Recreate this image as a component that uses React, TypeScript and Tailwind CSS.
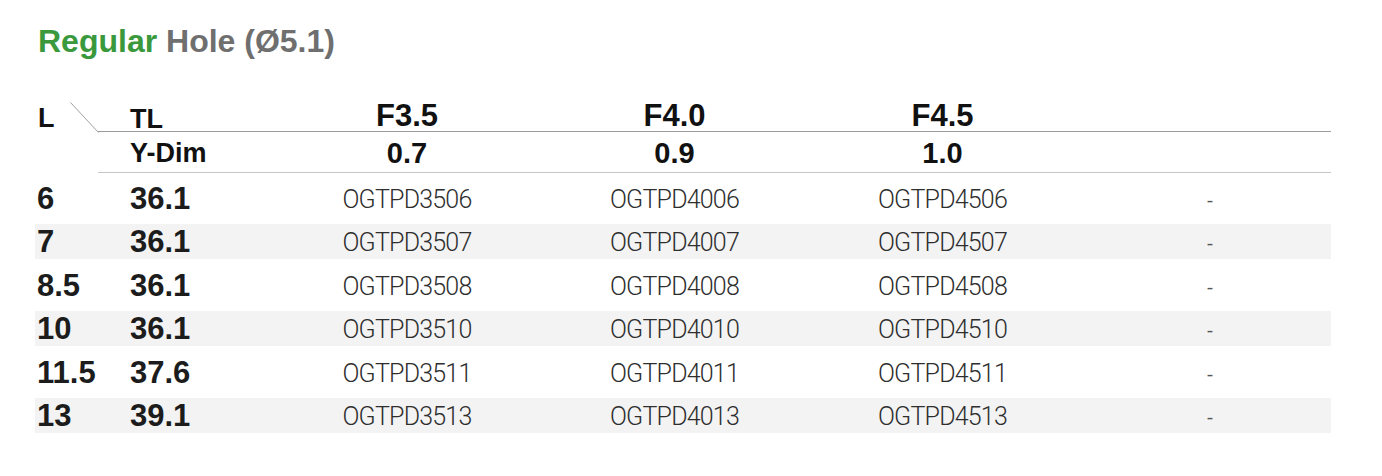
import React from "react";

const rows: [string, string, string, string, string][] = [
  ["6", "36.1", "OGTPD3506", "OGTPD4006", "OGTPD4506"],
  ["7", "36.1", "OGTPD3507", "OGTPD4007", "OGTPD4507"],
  ["8.5", "36.1", "OGTPD3508", "OGTPD4008", "OGTPD4508"],
  ["10", "36.1", "OGTPD3510", "OGTPD4010", "OGTPD4510"],
  ["11.5", "37.6", "OGTPD3511", "OGTPD4011", "OGTPD4511"],
  ["13", "39.1", "OGTPD3513", "OGTPD4013", "OGTPD4513"],
];

const sans = { fontFamily: '"Liberation Sans", Arial, sans-serif' };
const light = { fontFamily: 'Roboto, "Liberation Sans", sans-serif' };

export default function App() {
  return (
    <div className="w-[1382px] h-[476px] bg-white pl-[35px] overflow-hidden" style={sans}>
      <div className="pt-[25px] pl-[3px] text-[32px] leading-[32px] font-bold whitespace-nowrap">
        <span className="text-[#3a993c]">Regular</span>{" "}
        <span className="text-[#6f6f6f]">Hole (Ø5.1)</span>
      </div>

      <div className="mt-[35px] w-[1296px]">
        {/* header */}
        <div className="flex">
          <div className="relative w-[63px] h-[81px]">
            <div className="pl-[3px] pt-[13px] text-[27px] leading-none font-bold text-[#111]">L</div>
            <svg className="absolute left-[35px] top-[10px]" width="29" height="31" viewBox="0 0 29 31">
              <line x1="0.5" y1="0.5" x2="28.5" y2="30.5" stroke="#a0a0a0" strokeWidth="1" />
            </svg>
          </div>
          <div className="flex-1">
            <div className="grid grid-cols-[176px_266px_269px_267px_1fr] h-[40px] border-b border-[#9c9c9c]">
              <div className="pl-[32px] pt-[14px] text-[27px] leading-none font-bold text-[#111]">TL</div>
              <div className="text-center pt-[8px] text-[31px] leading-none font-bold text-[#111]">F3.5</div>
              <div className="text-center pt-[8px] text-[31px] leading-none font-bold text-[#111]">F4.0</div>
              <div className="text-center pt-[8px] text-[31px] leading-none font-bold text-[#111]">F4.5</div>
              <div />
            </div>
            <div className="grid grid-cols-[176px_266px_269px_267px_1fr] h-[41px] border-b border-[#c6c6c6]">
              <div className="pl-[32px] pt-[8px] text-[27px] leading-none font-bold text-[#111]">Y-Dim</div>
              <div className="text-center pt-[7px] text-[29px] leading-none font-bold text-[#111]">0.7</div>
              <div className="text-center pt-[7px] text-[29px] leading-none font-bold text-[#111]">0.9</div>
              <div className="text-center pt-[7px] text-[29px] leading-none font-bold text-[#111]">1.0</div>
              <div />
            </div>
          </div>
        </div>

        {/* body */}
        <div className="flex flex-col gap-[8.5px] pt-[7.5px]">
          {rows.map((r, i) => (
            <div
              key={r[0]}
              className={`grid grid-cols-[95px_144px_266px_269px_267px_1fr] h-[35px] ${
                i % 2 === 1 ? "bg-[#f3f3f3]" : "bg-white"
              }`}
            >
              <div className="pl-[2px] text-[31px] leading-[35px] font-bold text-[#1c1c1c]">{r[0]}</div>
              <div className="text-[31px] leading-[35px] font-bold text-[#1c1c1c]">{r[1]}</div>
              {[r[2], r[3], r[4]].map((c) => (
                <div
                  key={c}
                  className="text-center text-[25px] leading-[37px] font-light tracking-[-0.8px] text-[#2e2e2e]"
                  style={light}
                >
                  {c}
                </div>
              ))}
              <div
                className="pl-[13px] text-center text-[20px] leading-[37px] text-[#555]"
                style={{ fontFamily: '"Open Sans", sans-serif' }}
              >
                -
              </div>
            </div>
          ))}
        </div>
      </div>
    </div>
  );
}
